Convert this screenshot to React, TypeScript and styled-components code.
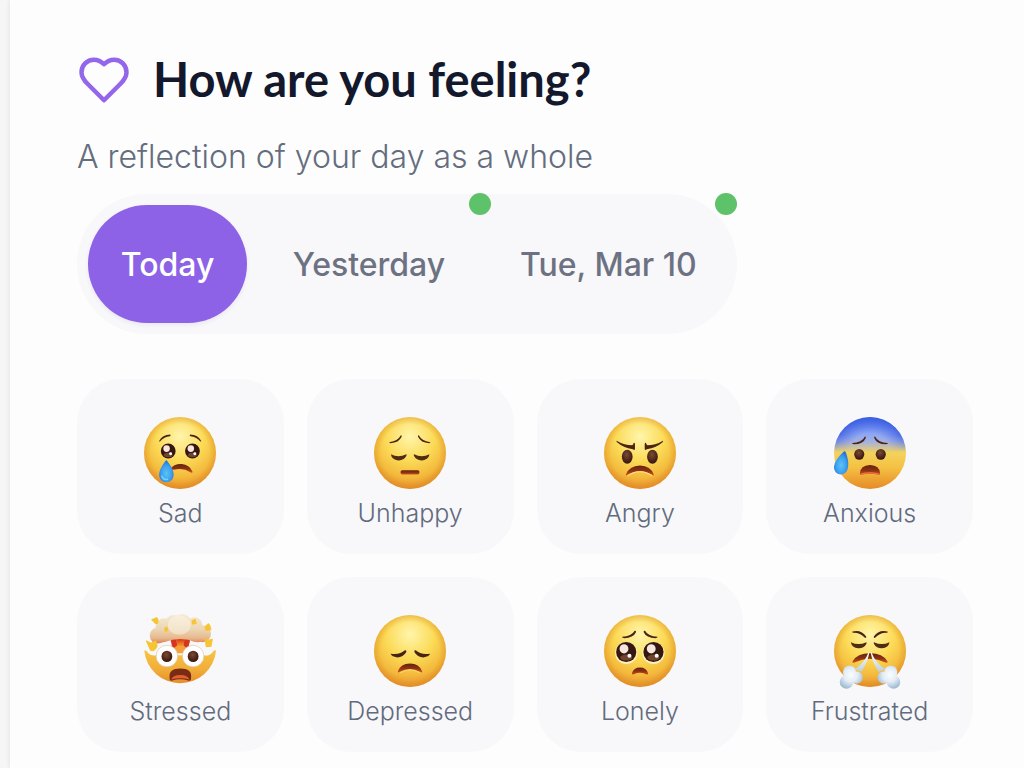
import React, { useState } from 'react';
import styled, { createGlobalStyle } from 'styled-components';

const GlobalStyle = createGlobalStyle`
  *, *::before, *::after { box-sizing: border-box; }
  body {
    margin: 0;
    background: #f5f5f6;
    font-family: Inter, "Open Sans", sans-serif;
  }
`;

const Page = styled.div`
  padding-left: 10px;
  background: #f6f6f7;
`;

const Card = styled.main`
  min-height: 100vh;
  padding: 52px 51px 15px 67px;
  background: #fdfdfd;
  box-shadow: 0 0 5px rgba(30, 20, 60, 0.1);
`;

const Heading = styled.header`
  display: flex;
  align-items: center;
  gap: 22px;
`;

const HeartIcon = styled.svg`
  flex: none;
  width: 54px;
  height: 54px;
  fill: none;
  stroke: #9466ea;
  stroke-width: 2;
  stroke-linecap: round;
  stroke-linejoin: round;
`;

const Title = styled.h1`
  margin: 0;
  font-family: Lato, sans-serif;
  font-size: 47px;
  font-weight: 700;
  line-height: 55px;
  color: #13182c;
`;

const Subtitle = styled.p`
  margin: 27px 0 14px;
  font-size: 32px;
  font-weight: 300;
  line-height: 46px;
  color: #646d7e;
`;

const DayPicker = styled.div`
  display: grid;
  grid-template-columns: 159fr 221fr 235fr;
  gap: 11px;
  width: 100%;
  max-width: 660px;
  padding: 11px;
  border-radius: 70px;
  background: #f8f8fb;
`;

const DayButton = styled.button<{ $active: boolean }>`
  position: relative;
  height: 118px;
  padding: 2px 0 0;
  border: 0;
  border-radius: 59px;
  background: ${(p) => (p.$active ? '#8d62e6' : 'transparent')};
  box-shadow: ${(p) => (p.$active ? '0 2px 4px rgba(60, 30, 120, 0.08)' : 'none')};
  color: ${(p) => (p.$active ? '#ffffff' : '#6d7282')};
  font: 500 32px/48px Inter, sans-serif;
  white-space: nowrap;
  cursor: pointer;
`;

const LoggedDot = styled.span`
  position: absolute;
  top: -12px;
  right: -11px;
  width: 22px;
  height: 22px;
  border-radius: 50%;
  background: #5dc269;
`;

const MoodGrid = styled.div`
  display: grid;
  grid-template-columns: repeat(4, minmax(0, 1fr));
  gap: 23px;
  margin-top: 45px;
`;

const MoodButton = styled.button`
  display: flex;
  flex-direction: column;
  align-items: center;
  gap: 8px;
  padding: 38px 8px 25px;
  border: 0;
  border-radius: 44px;
  background: #f8f8fb;
  color: #626b7d;
  font: 300 25px/32px Inter, sans-serif;
  cursor: pointer;
`;

const Face = styled.svg`
  width: 72px;
  height: 72px;
  overflow: visible;
`;

const GradientSheet = styled.svg`
  position: absolute;
  width: 0;
  height: 0;
`;

const INK = '#4a2413';

const Gradients = () => (
  <GradientSheet aria-hidden="true">
    <defs>
      <radialGradient id="skin" cx="0.5" cy="0.27" r="0.76">
        <stop offset="0" stopColor="#fff5ac" />
        <stop offset="0.45" stopColor="#fbda55" />
        <stop offset="0.75" stopColor="#f3b93c" />
        <stop offset="1" stopColor="#e48425" />
      </radialGradient>
      <radialGradient id="rim" cx="0.5" cy="0.5" r="0.5">
        <stop offset="0.8" stopColor="#d98a20" stopOpacity="0" />
        <stop offset="1" stopColor="#d98a20" stopOpacity="0.4" />
      </radialGradient>
      <linearGradient id="bowl" gradientUnits="userSpaceOnUse" x1="0" y1="135" x2="0" y2="243">
        <stop offset="0" stopColor="#f6c544" />
        <stop offset="0.55" stopColor="#f1ac38" />
        <stop offset="1" stopColor="#e48425" />
      </linearGradient>
      <linearGradient id="fear" x1="0" y1="0" x2="0" y2="1">
        <stop offset="0" stopColor="#5478ef" />
        <stop offset="0.22" stopColor="#8ba4f6" />
        <stop offset="0.34" stopColor="#a2b0e4" />
        <stop offset="0.5" stopColor="#f3d35a" />
        <stop offset="0.7" stopColor="#f4c143" />
        <stop offset="1" stopColor="#e68a26" />
      </linearGradient>
      <radialGradient id="fearRim" cx="0.5" cy="0.5" r="0.5">
        <stop offset="0.55" stopColor="#2d50dc" stopOpacity="0" />
        <stop offset="1" stopColor="#2d50dc" stopOpacity="0.7" />
      </radialGradient>
      <linearGradient id="fadeDown" x1="0" y1="0" x2="0" y2="1">
        <stop offset="0.25" stopColor="#fff" />
        <stop offset="0.48" stopColor="#000" />
      </linearGradient>
      <mask id="upperHead">
        <circle cx="149" cy="143" r="107" fill="url(#fadeDown)" />
      </mask>
      <radialGradient id="eye" cx="0.45" cy="0.35" r="0.65">
        <stop offset="0" stopColor="#7b4a35" />
        <stop offset="1" stopColor="#35150b" />
      </radialGradient>
      <linearGradient id="mouth" x1="0" y1="0" x2="0" y2="1">
        <stop offset="0" stopColor="#63230f" />
        <stop offset="0.55" stopColor="#8e3214" />
        <stop offset="1" stopColor="#d0551f" />
      </linearGradient>
      <radialGradient id="tear" cx="0.5" cy="0.6" r="0.6">
        <stop offset="0" stopColor="#59c4f5" />
        <stop offset="0.6" stopColor="#3d9fee" />
        <stop offset="1" stopColor="#1f6fd8" />
      </radialGradient>
      <linearGradient id="steam" x1="0" y1="0" x2="0" y2="1">
        <stop offset="0" stopColor="#ffffff" />
        <stop offset="1" stopColor="#bccfdc" />
      </linearGradient>
      <radialGradient id="puffLeft" gradientUnits="userSpaceOnUse" cx="92" cy="208" r="42">
        <stop offset="0" stopColor="#fbfdff" />
        <stop offset="0.5" stopColor="#e4ecf5" />
        <stop offset="1" stopColor="#9dbad0" />
      </radialGradient>
      <radialGradient id="puffRight" gradientUnits="userSpaceOnUse" cx="208" cy="208" r="42">
        <stop offset="0" stopColor="#fbfdff" />
        <stop offset="0.5" stopColor="#e4ecf5" />
        <stop offset="1" stopColor="#9dbad0" />
      </radialGradient>
      <linearGradient id="cloud" gradientUnits="userSpaceOnUse" x1="0" y1="28" x2="0" y2="116">
        <stop offset="0" stopColor="#f5ead3" />
        <stop offset="0.5" stopColor="#ecd6b3" />
        <stop offset="0.8" stopColor="#e6b98e" />
        <stop offset="1" stopColor="#e5774b" />
      </linearGradient>
      <linearGradient id="blast" x1="0" y1="0" x2="0" y2="1">
        <stop offset="0" stopColor="#d9341d" />
        <stop offset="1" stopColor="#f5a02e" />
      </linearGradient>
    </defs>
  </GradientSheet>
);

const Head = () => (
  <>
    <circle cx="150" cy="143" r="107" fill="url(#skin)" />
    <circle cx="150" cy="143" r="107" fill="url(#rim)" />
  </>
);

const Brow = ({ d }: { d: string }) => <path d={d} fill={INK} />;

const GlossyEye = ({ x, y, r }: { x: number; y: number; r: number }) => (
  <>
    <circle cx={x} cy={y} r={r} fill="#35170f" />
    <ellipse cx={x} cy={y + r * 0.55} rx={r * 0.6} ry={r * 0.3} fill="#70432f" />
    <ellipse cx={x - r * 0.22} cy={y - r * 0.32} rx={r * 0.44} ry={r * 0.46} fill="#f6e6df" />
    <circle cx={x + r * 0.32} cy={y + r * 0.38} r={r * 0.2} fill="#fff" />
  </>
);

const ClosedEyes = ({ y }: { y: number }) => (
  <>
    <path d={`M93 ${y}q23 11 46 0q2 1 0 5q-8 14-24 13q-19-2-22-18Z`} fill="#4f2d12" />
    <path d={`M208 ${y}q-23 11-46 0q-2 1 0 5q8 14 24 13q19-2 22-18Z`} fill="#4f2d12" />
  </>
);

const Sad = () => (
  <>
    <Head />
    <Brow d="M88 107q9-18 33-19q3 3-1 5q-17 1-29 15q-4 2-3-1Z" />
    <Brow d="M213 107q-9-18-33-19q-3 3 1 5q17 1 29 15q4 2 3-1Z" />
    <GlossyEye x={115} y={137} r={22} />
    <GlossyEye x={187} y={137} r={22} />
    <path d="M120 192q12-17 35-16q23 2 32 22q1 6-6 2q-23-15-49-7Z" fill="url(#mouth)" />
    <path d="M107 166q3-3 6 2q18 22 18 39c0 15-10 23-22 23s-21-9-21-23q0-15 19-41Z" fill="url(#tear)" />
    <path d="M96 212q4 12 17 9" fill="none" stroke="#76d5fa" strokeWidth="4" strokeLinecap="round" />
  </>
);

const Unhappy = () => (
  <>
    <Head />
    <Brow d="M89 111q25-4 34-21q4 0 2 5q-8 18-33 19q-5-1-3-3Z" />
    <Brow d="M210 111q-25-4-34-21q-4 0-2 5q8 18 33 19q5-1 3-3Z" />
    <ClosedEyes y={147} />
    <rect x="122" y="194" width="56" height="13" rx="5" fill="url(#mouth)" />
  </>
);

const Angry = () => (
  <>
    <Head />
    <ellipse cx="112" cy="154" rx="16" ry="21" fill="url(#eye)" />
    <ellipse cx="187" cy="154" rx="16" ry="21" fill="url(#eye)" />
    <Brow d="M82 107q22 13 45 13q3-1 4-7q4-2 4 4v14q-1 5-6 1q-29-5-48-22q-2-4 1-3Z" />
    <Brow d="M217 107q-22 13-45 13q-3-1-4-7q-4-2-4 4v14q1 5 6 1q29-5 48-22q2-4-1-3Z" />
    <path d="M108 207q10-26 42-27q32 1 41 27q0 5-5 1q-36-23-73 0q-5 4-5-1Z" fill="url(#mouth)" />
    <path d="M113 211q37-24 73 0" fill="none" stroke="#fbe08c" strokeWidth="3" />
  </>
);

const Anxious = () => (
  <>
    <circle cx="149" cy="143" r="107" fill="url(#fear)" />
    <circle cx="149" cy="143" r="107" fill="url(#fearRim)" mask="url(#upperHead)" />
    <Brow d="M96 113q29 0 38-19q5 0 2 5q-7 18-35 18q-7-1-5-4Z" />
    <Brow d="M202 113q-29 0-38-19q-5 0-2 5q7 18 35 18q7-1 5-4Z" />
    <ellipse cx="117" cy="147" rx="15" ry="16" fill="url(#eye)" />
    <ellipse cx="181" cy="147" rx="15" ry="16" fill="url(#eye)" />
    <path d="M119 204q1-24 30-25q29 1 30 25q0 5-5 4q-25-7-50 0q-5 1-5-4Z" fill="url(#mouth)" />
    <path d="M123 206q26-8 52 0" fill="none" stroke="#f17b3a" strokeWidth="4" strokeLinecap="round" />
    <path d="M72 138q3-1 5 3q9 24 7 41c-1 15-9 25-21 25s-21-9-21-23q1-20 30-46Z" fill="url(#tear)" />
  </>
);

const Stressed = () => (
  <>
    <path d="M44 137q3-5 9 3q9 13 28 10h138q19 3 29-11q6-7 9-2a107 106 0 0 1-213 0Z" fill="url(#bowl)" />
    <path d="M122 100h58l-10 44h-38Z" fill="#f4a13a" />
    <g fill="url(#cloud)">
      <circle cx="84" cy="91" r="24" />
      <circle cx="103" cy="65" r="25" />
      <circle cx="131" cy="55" r="25" />
      <circle cx="156" cy="55" r="28" />
      <circle cx="193" cy="61" r="24" />
      <circle cx="217" cy="86" r="25" />
      <path d="M78 60h140v48q-18 7-38-2q-30-9-60 0q-22 9-42 5Z" />
    </g>
    <ellipse cx="148" cy="60" rx="34" ry="29" fill="#fcf6e8" opacity="0.5" />
    <path d="M122 106q8-4 17-3l3 18-18 12q4-12-2-27ZM180 106q-8-4-17-3l-3 18 17 12q-3-12 3-27Z" fill="#d83520" />
    <path d="M139 103q12-3 24 0l-3 20h-18Z" fill="url(#blast)" />
    <g fill="#f5c533" strokeLinejoin="round" stroke="#f5c533" strokeWidth="3">
      <path d="m66 44 15-6q5 4 3 16l-6 2Z" />
      <path d="m104 70 7-4 3 9-7 5Z" />
      <path d="m186 47 9-4 3 12-11 2Z" />
      <path d="m224 65 11-9q7 7 7 18l-14 2Z" />
      <path d="m225 101 10 4 11-3-4 21-14 1Z" />
      <path d="m50 107 14 7 14-7 4 16q-9 18-20 11Z" />
    </g>
    <circle cx="111" cy="152" r="32" fill="#fff" stroke="#d8c4a8" strokeWidth="2" />
    <circle cx="189" cy="152" r="32" fill="#fff" stroke="#d8c4a8" strokeWidth="2" />
    <ellipse cx="111" cy="153" rx="16" ry="17" fill="url(#eye)" />
    <ellipse cx="189" cy="153" rx="16" ry="17" fill="url(#eye)" />
    <path d="M119 216q-3-27 32-27t32 27q0 12-9 9-24-8-47 0-8 3-8-9Z" fill="#7a2b15" />
    <path d="M124 222q4-14 27-14t27 14q-27-8-54 0Z" fill="#e0602f" />
  </>
);

const Depressed = () => (
  <>
    <g transform="translate(0 -6)">
      <Head />
    </g>
    <Brow d="M93 145q27 4 42-10q5-2 4 5q-9 16-27 16q-16-2-19-9Z" />
    <Brow d="M209 145q-27 4-42-10q-5-2-4 5q9 16 27 16q16-2 19-9Z" />
    <path d="M114 197q8-22 36-23q28 1 36 23q1 6-6 2q-30-17-60 0q-7 4-6-2Z" fill="url(#mouth)" />
    <path d="M120 202q30-17 60 0" fill="none" stroke="#fbd66c" strokeWidth="3" />
  </>
);

const Lonely = () => (
  <>
    <g transform="translate(0 -6)">
      <Head />
    </g>
    <Brow d="M97 95q28-1 37-18q5-1 4 4q-8 17-35 18q-8-1-6-4Z" />
    <Brow d="M202 95q-28-1-37-18q-5-1-4 4q8 17 35 18q8-1 6-4Z" />
    <circle cx="109" cy="143" r="33" fill="#fff0bd" />
    <circle cx="190" cy="143" r="33" fill="#fff0bd" />
    <GlossyEye x={109} y={140} r={30} />
    <GlossyEye x={190} y={140} r={30} />
    <path d="M126 203q5-17 24-17t24 17q0 6-6 3-18-8-36 0-6 3-6-3Z" fill="url(#mouth)" />
  </>
);

const Frustrated = () => (
  <>
    <g transform="translate(-1 -6)">
      <Head />
    </g>
    <Brow d="M97 79q27-6 41 16q0 5-5 2q-14-15-34-14q-5-1-2-4Z" />
    <Brow d="M201 79q-27-6-41 16q0 5 5 2q14-15 34-14q5-1 2-4Z" />
    <g transform="translate(-1 0)">
      <ClosedEyes y={111} />
    </g>
    <path d="M97 168q14-24 52-24t52 24q1 6-6 3-46-22-92 0-7 3-6-3Z" fill="url(#mouth)" />
    <path d="M144 142q4-6 2 5-5 27-23 52l-20-7q31-21 41-50Z" fill="url(#steam)" />
    <path d="M154 142q-4-6-2 5 5 27 23 52l20-7q-31-21-41-50Z" fill="url(#steam)" />
    <g fill="url(#puffLeft)">
      <circle cx="88" cy="199" r="19" />
      <circle cx="110" cy="216" r="18" />
      <circle cx="79" cy="229" r="20" />
      <path d="M70 199h36l12 18-22 18-25-4Z" />
    </g>
    <g fill="url(#puffRight)">
      <circle cx="211" cy="199" r="19" />
      <circle cx="189" cy="216" r="18" />
      <circle cx="219" cy="229" r="20" />
      <path d="M229 199h-36l-12 18 22 18 25-4Z" />
    </g>
  </>
);

const moods = [
  { label: 'Sad', Drawing: Sad, box: '43 36 214 214' },
  { label: 'Unhappy', Drawing: Unhappy, box: '43 36 214 214' },
  { label: 'Angry', Drawing: Angry, box: '43 36 214 214' },
  { label: 'Anxious', Drawing: Anxious, box: '42 36 214 214' },
  { label: 'Stressed', Drawing: Stressed, box: '43 30 214 214' },
  { label: 'Depressed', Drawing: Depressed, box: '43 30 214 214' },
  { label: 'Lonely', Drawing: Lonely, box: '43 30 214 214' },
  { label: 'Frustrated', Drawing: Frustrated, box: '42 30 214 214' },
];

const days = [
  { label: 'Today', logged: false },
  { label: 'Yesterday', logged: true },
  { label: 'Tue, Mar 10', logged: true },
];

export default function App() {
  const [day, setDay] = useState('Today');

  return (
    <Page>
      <GlobalStyle />
      <Gradients />
      <Card>
        <Heading>
          <HeartIcon viewBox="0 0 24 24" aria-hidden="true">
            <path d="M19 14c1.49-1.46 3-3.21 3-5.5A5.5 5.5 0 0 0 16.5 3c-1.76 0-3 .5-4.5 2-1.5-1.5-2.74-2-4.5-2A5.5 5.5 0 0 0 2 8.5c0 2.3 1.5 4.05 3 5.5l7 7Z" />
          </HeartIcon>
          <Title>How are you feeling?</Title>
        </Heading>
        <Subtitle>A reflection of your day as a whole</Subtitle>
        <DayPicker role="group" aria-label="Day">
          {days.map(({ label, logged }) => (
            <DayButton
              key={label}
              type="button"
              $active={label === day}
              aria-pressed={label === day}
              onClick={() => setDay(label)}
            >
              {label}
              {logged && <LoggedDot />}
            </DayButton>
          ))}
        </DayPicker>
        <MoodGrid>
          {moods.map(({ label, Drawing, box }) => (
            <MoodButton key={label} type="button">
              <Face viewBox={box} aria-hidden="true">
                <Drawing />
              </Face>
              {label}
            </MoodButton>
          ))}
        </MoodGrid>
      </Card>
    </Page>
  );
}
